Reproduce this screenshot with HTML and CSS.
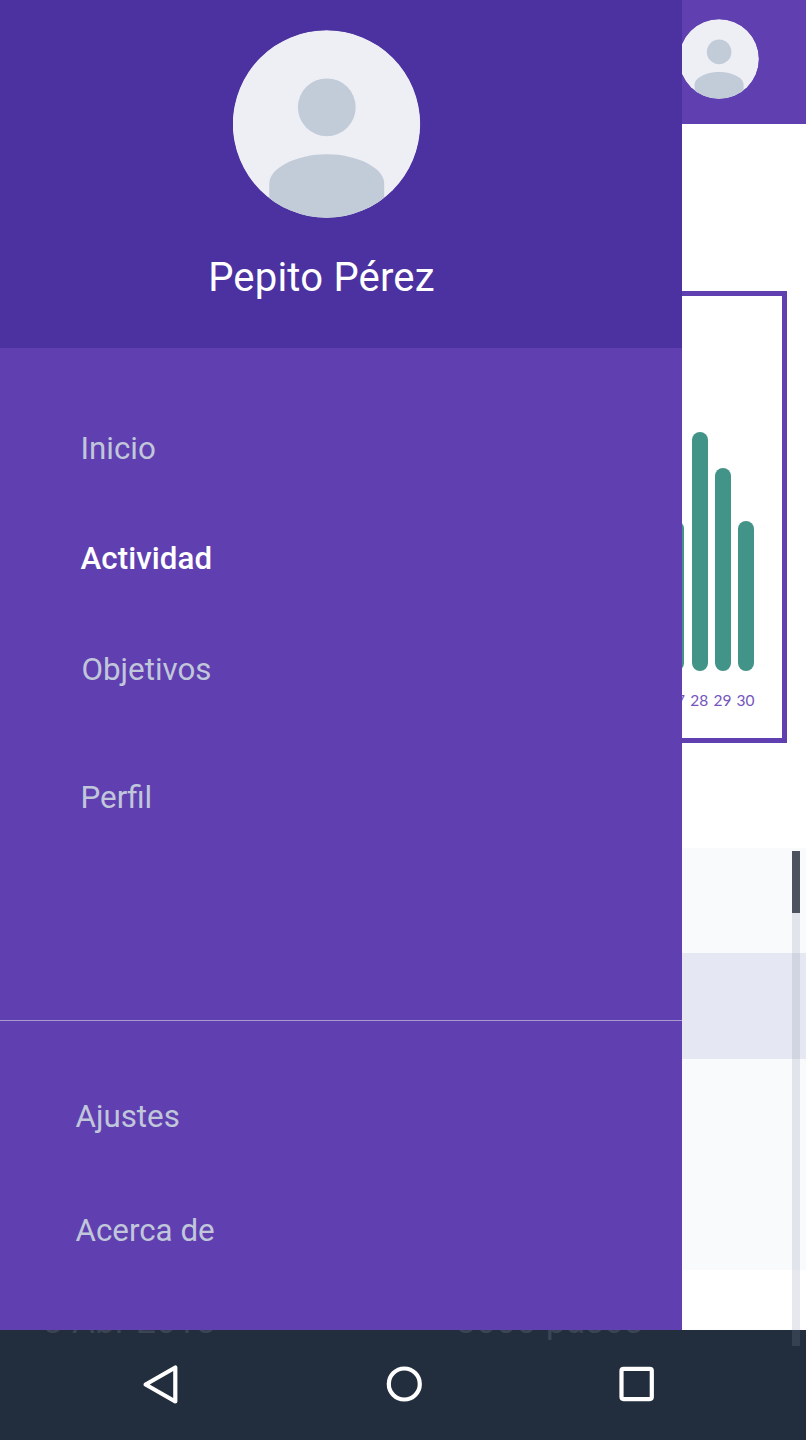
FILE: index.html
```html
<!DOCTYPE html>
<html lang="es">
<head>
<meta charset="utf-8">
<title>Actividad</title>
<link rel="stylesheet" href="styles.css">
</head>
<body>
<svg class="defs" width="0" height="0">
  <defs>
    <clipPath id="round"><circle cx="94" cy="94" r="93.700"/></clipPath>
    <symbol id="avatar" viewBox="0 0 188 188">
      <g clip-path="url(#round)">
        <circle cx="94" cy="94" r="94" fill="#eeeff5"/>
        <circle cx="94.300" cy="77.300" r="28.900" fill="#c2cbd8"/>
        <path d="M36.800 188V153.500C36.800 138 64 124.300 94.300 124.300S151.700 138 151.700 153.500V188Z" fill="#c2cbd8"/>
      </g>
    </symbol>
  </defs>
</svg>
<div class="screen">
  <div class="page">
    <header class="topbar">
      <svg class="avatar-small"><use href="#avatar"/></svg>
    </header>
    <section class="chart">
      <div class="day"><i class="bar" style="height:150px"></i><span>27</span></div>
      <div class="day"><i class="bar" style="height:239px"></i><span>28</span></div>
      <div class="day"><i class="bar" style="height:203px"></i><span>29</span></div>
      <div class="day"><i class="bar" style="height:150px"></i><span>30</span></div>
    </section>
    <section class="list">
      <div class="row"></div>
      <div class="row selected"></div>
      <div class="row"></div>
      <div class="row"></div>
    </section>
  </div>

  <aside class="drawer">
    <div class="profile">
      <svg class="avatar"><use href="#avatar"/></svg>
      <div class="name">Pepito Pérez</div>
    </div>
    <nav class="menu">
      <a class="item inicio">Inicio</a>
      <a class="item active">Actividad</a>
      <a class="item objetivos">Objetivos</a>
      <a class="item perfil">Perfil</a>
    </nav>
    <nav class="extra">
      <a class="item ajustes">Ajustes</a>
      <a class="item acerca">Acerca de</a>
    </nav>
  </aside>

  <footer class="navbar">
    <div class="under"><span class="date">8 Abr 2018</span><span class="steps">8000 pasos</span></div>
    <svg width="806" height="110" viewBox="0 0 806 110" fill="none" stroke="#fff" stroke-width="4.200" stroke-linejoin="round">
      <path d="M145.600 54.500L175.300 37.500V71.500Z"/>
      <circle cx="404.300" cy="54" r="15.500"/>
      <rect x="621.500" y="38.800" width="30.300" height="30.300" rx="2"/>
    </svg>
  </footer>
  <div class="scroll"><div class="thumb"></div></div>
</div>
</body>
</html>
```
FILE: styles.css
```css
body {
  margin: 0;
  background: #fff;
  font-family: Roboto, "Liberation Sans", sans-serif;
}

.defs {
  position: absolute;
}

.screen {
  position: relative;
  width: 806px;
  height: 1440px;
  overflow: hidden;
}

.topbar {
  height: 124px;
  box-sizing: border-box;
  padding: 18.500px 47px 0 0;
  display: flex;
  justify-content: flex-end;
  background: #603fb0;
}

.avatar-small {
  width: 80px;
  height: 80px;
}

.chart {
  box-sizing: border-box;
  height: 452px;
  margin: 167px 19px 0;
  padding: 0 24.300px 28.500px 0;
  border: 5px solid #603fb0;
  display: flex;
  justify-content: flex-end;
  align-items: flex-end;
}

.day {
  width: 23.200px;
  display: flex;
  flex-direction: column;
  align-items: center;
  gap: 20px;
  font: 15.500px/19px Lato, sans-serif;
  color: #7455bd;
}

.day span {
  margin-left: -1px;
}

.bar {
  width: 15.600px;
  border-radius: 8px;
  background: #429488;
}

.list {
  margin-top: 105px;
}

.row {
  height: 105.400px;
  background: #f9fafc;
}

.selected {
  background: #e5e8f2;
}

.scroll {
  position: absolute;
  left: 792px;
  top: 851px;
  width: 8px;
  height: 495px;
  background: rgba(130, 140, 165, 0.2);
}

.thumb {
  height: 62px;
  background: #4c535f;
}

.drawer {
  position: absolute;
  left: 0;
  top: 0;
  width: 682px;
  height: 1330px;
  background: #603fb0;
}

.profile {
  height: 348px;
  background: #4b32a0;
}

.avatar {
  display: block;
  width: 188px;
  height: 188px;
  padding: 30px 0 0 232.500px;
}

.name {
  padding: 36px 0 0 208.200px;
  font-size: 40px;
  letter-spacing: 0.200px;
  line-height: 47px;
  color: #fff;
}

.menu {
  box-sizing: border-box;
  height: 672px;
  padding: 82px 0 0 80.500px;
}

.extra {
  border-top: 1px solid #a99bcf;
  padding: 77px 0 0 75.500px;
}

.item {
  display: block;
  font-size: 31.300px;
  line-height: 38px;
  color: #c0c7da;
}

.active {
  margin-top: 72px;
  font-weight: 500;
  letter-spacing: 0.050px;
  color: #fff;
}

.objetivos {
  margin-top: 73px;
  padding-left: 1px;
}

.perfil {
  margin-top: 90px;
}

.acerca {
  margin-top: 76px;
}

.navbar {
  position: absolute;
  left: 0;
  top: 1330px;
  width: 806px;
  height: 110px;
  overflow: hidden;
  background: #222d3d;
}

.navbar svg {
  display: block;
}

.under {
  position: absolute;
  left: 43px;
  top: -29px;
  display: flex;
  font-size: 35px;
  line-height: 42px;
  color: #3b4555;
}

.date {
  width: 413px;
  letter-spacing: 0.300px;
}

.steps {
  letter-spacing: 0.500px;
}
```
